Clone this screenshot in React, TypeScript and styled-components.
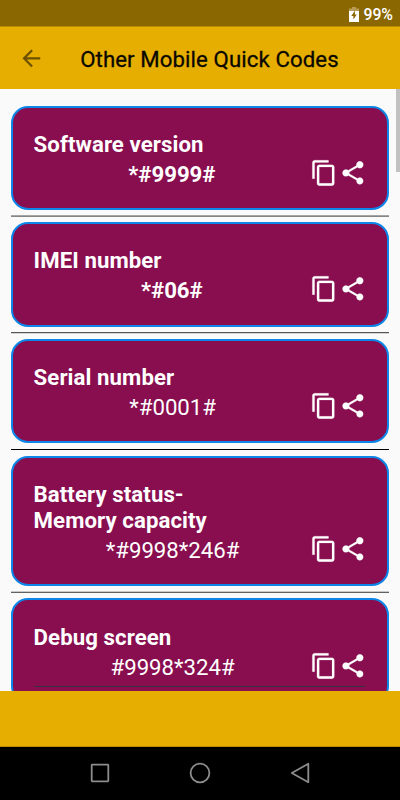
import React from 'react';
import styled, { createGlobalStyle } from 'styled-components';

const Global = createGlobalStyle`
  * { box-sizing: border-box; }
  body { margin: 0; background: #fafafa; font-family: Roboto, "Liberation Sans", sans-serif; }
`;

const Screen = styled.div`
  width: 400px;
  height: 800px;
  display: flex;
  flex-direction: column;
  overflow: hidden;
  background: #fafafa;
`;

const StatusBar = styled.div`
  flex: none;
  height: 27px;
  padding: 2px 7px 0 0;
  display: flex;
  align-items: center;
  justify-content: flex-end;
  gap: 4px;
  background: #8a6700;
  border-bottom: 1px solid #b98c00;
  color: #fff;
  font-size: 15.8px;
  font-weight: 500;
`;

const AppBar = styled.header`
  flex: none;
  height: 62px;
  padding: 0 0 0 18px;
  display: flex;
  align-items: center;
  background: #e6ae00;
`;

const AppTitle = styled.h1`
  margin: 1px 0 0 35.5px;
  font-size: 22.2px;
  line-height: 28px;
  font-weight: 400;
  letter-spacing: 0.1px;
  -webkit-text-stroke: 0.3px #0a0800;
  white-space: nowrap;
  color: #0a0800;
`;

const Body = styled.main`
  position: relative;
  height: 602px;
  flex: none;
  overflow: hidden;
  padding: 16.6px 11.1px 0;
`;

const ScrollThumb = styled.div`
  position: absolute;
  top: 0;
  right: 0;
  width: 4.5px;
  height: 83px;
  background: #c1c1c1;
`;

const Card = styled.section<{ $height?: number; $inset?: number }>`
  height: ${(p) => p.$height ?? 104.4}px;
  border: 2.2px solid #0c86e8;
  border-radius: 17px;
  background: #880e4f;
  padding: ${(p) => p.$inset ?? 23.3}px 20px 0 20.5px;
  color: #fff;
`;

const Divider = styled.div<{ $upper: string; $lower: string }>`
  height: 2px;
  margin: 5.1px 0 5.17px;
  background: linear-gradient(${(p) => p.$upper} 50%, ${(p) => p.$lower} 50%);
`;

const Label = styled.h2`
  margin: 0;
  font-size: 22.2px;
  line-height: 26px;
  font-weight: 700;
  letter-spacing: 0.08px;
  white-space: pre-line;
`;

const CodeRow = styled.div`
  display: flex;
  align-items: center;
  height: 28px;
  margin-top: 2px;
`;

const Code = styled.div<{ $bold?: boolean }>`
  width: 276.5px;
  flex: none;
  text-align: center;
  font-size: 22.2px;
  line-height: 28px;
  padding-top: 2px;
  padding-left: ${(p) => (p.$bold ? 0 : 1.5)}px;
  font-weight: ${(p) => (p.$bold ? 700 : 400)};
`;

const Actions = styled.div`
  display: flex;
  gap: 1.2px;
`;

const Icon = styled.svg`
  width: 27.8px;
  height: 27.8px;
  display: block;
  fill: #fff;
  stroke: #fff;
  stroke-width: 0.15;
`;

const Underline = styled.div`
  height: 1px;
  margin: 5.6px 2px 0 0;
  background: #37303f;
`;

const Footer = styled.div`
  flex: none;
  height: 56px;
  background: #e6ae00;
  border-bottom: 1px solid #bd8f00;
`;

const NavBar = styled.nav`
  flex: 1;
  display: flex;
  align-items: center;
  justify-content: center;
  gap: 76px;
  padding-bottom: 1px;
  background: #000;
`;

const NavIcon = styled.svg`
  width: 24px;
  height: 24px;
  fill: none;
  stroke: #8c8c8c;
  stroke-width: 1.8;
  stroke-linejoin: round;
`;

interface Entry {
  label: string;
  code: string;
  bold?: boolean;
  height?: number;
  inset?: number;
  line?: [string, string];
}

const entries: Entry[] = [
  { label: 'Software version', code: '*#9999#', bold: true, line: ['#a5a5a5', '#858585'] },
  { label: 'IMEI number', code: '*#06#', bold: true, inset: 22.6, line: ['#555555', '#d4d4d4'] },
  { label: 'Serial number', code: '*#0001#', line: ['#fafafa', '#000000'] },
  { label: 'Battery status-\nMemory capacity', code: '*#9998*246#', height: 130.4, line: ['#c8c8c8', '#626262'] },
  { label: 'Debug screen', code: '#9998*324#', inset: 24 },
];

const CopyIcon = () => (
  <Icon viewBox="0 0 24 24">
    <path d="M16 1H4c-1.1 0-2 .9-2 2v14h2V3h12V1zm3 4H8c-1.1 0-2 .9-2 2v14c0 1.1.9 2 2 2h11c1.1 0 2-.9 2-2V7c0-1.1-.9-2-2-2zm0 16H8V7h11v14z" />
  </Icon>
);

const ShareIcon = () => (
  <Icon viewBox="0 0 24 24">
    <path d="M18 16.08c-.76 0-1.44.3-1.96.77L8.91 12.7c.05-.23.09-.46.09-.7s-.04-.47-.09-.7l7.05-4.11c.54.5 1.25.81 2.04.81 1.66 0 3-1.34 3-3s-1.34-3-3-3-3 1.34-3 3c0 .24.04.47.09.7L8.04 9.81C7.5 9.31 6.79 9 6 9c-1.66 0-3 1.34-3 3s1.34 3 3 3c.79 0 1.5-.31 2.04-.81l7.12 4.16c-.05.21-.08.43-.08.65 0 1.61 1.31 2.92 2.92 2.92s2.92-1.31 2.92-2.92-1.31-2.92-2.92-2.92z" />
  </Icon>
);

export default function App() {
  return (
    <>
      <Global />
      <Screen>
        <StatusBar>
          <svg width="10" height="15" viewBox="0 0 10 15">
            <path d="M3 0h4v1.5h3V5H0V1.5h3z" fill="#b89c55" />
            <path d="M0 4h10v11H0z" fill="#fff" />
            <path d="M5.9 3.5 2.3 9h2.1v3.6L7.8 7.5H5.9z" fill="#8a6700" />
          </svg>
          <span>99%</span>
        </StatusBar>
        <AppBar>
          <svg width="26.7" height="26.7" viewBox="0 0 24 24" fill="#6c5200">
            <path d="M20 11H7.83l5.59-5.59L12 4l-8 8 8 8 1.41-1.41L7.83 13H20v-2z" />
          </svg>
          <AppTitle>Other Mobile Quick Codes</AppTitle>
        </AppBar>
        <Body>
          {entries.map((e) => (
            <React.Fragment key={e.label}>
              <Card $height={e.height} $inset={e.inset}>
                <Label>{e.label}</Label>
                <CodeRow>
                  <Code $bold={e.bold}>{e.code}</Code>
                  <Actions>
                    <CopyIcon />
                    <ShareIcon />
                  </Actions>
                </CodeRow>
                {!e.line && <Underline />}
              </Card>
              {e.line && <Divider $upper={e.line[0]} $lower={e.line[1]} />}
            </React.Fragment>
          ))}
          <ScrollThumb />
        </Body>
        <Footer />
        <NavBar>
          <NavIcon viewBox="0 0 24 24">
            <rect x="3.7" y="3.7" width="16.6" height="16.6" rx="0.5" />
          </NavIcon>
          <NavIcon viewBox="0 0 24 24">
            <circle cx="12" cy="12" r="9.4" />
          </NavIcon>
          <NavIcon viewBox="0 0 24 24">
            <path d="M20.3 2.8v18.4L3.8 12z" />
          </NavIcon>
        </NavBar>
      </Screen>
    </>
  );
}
